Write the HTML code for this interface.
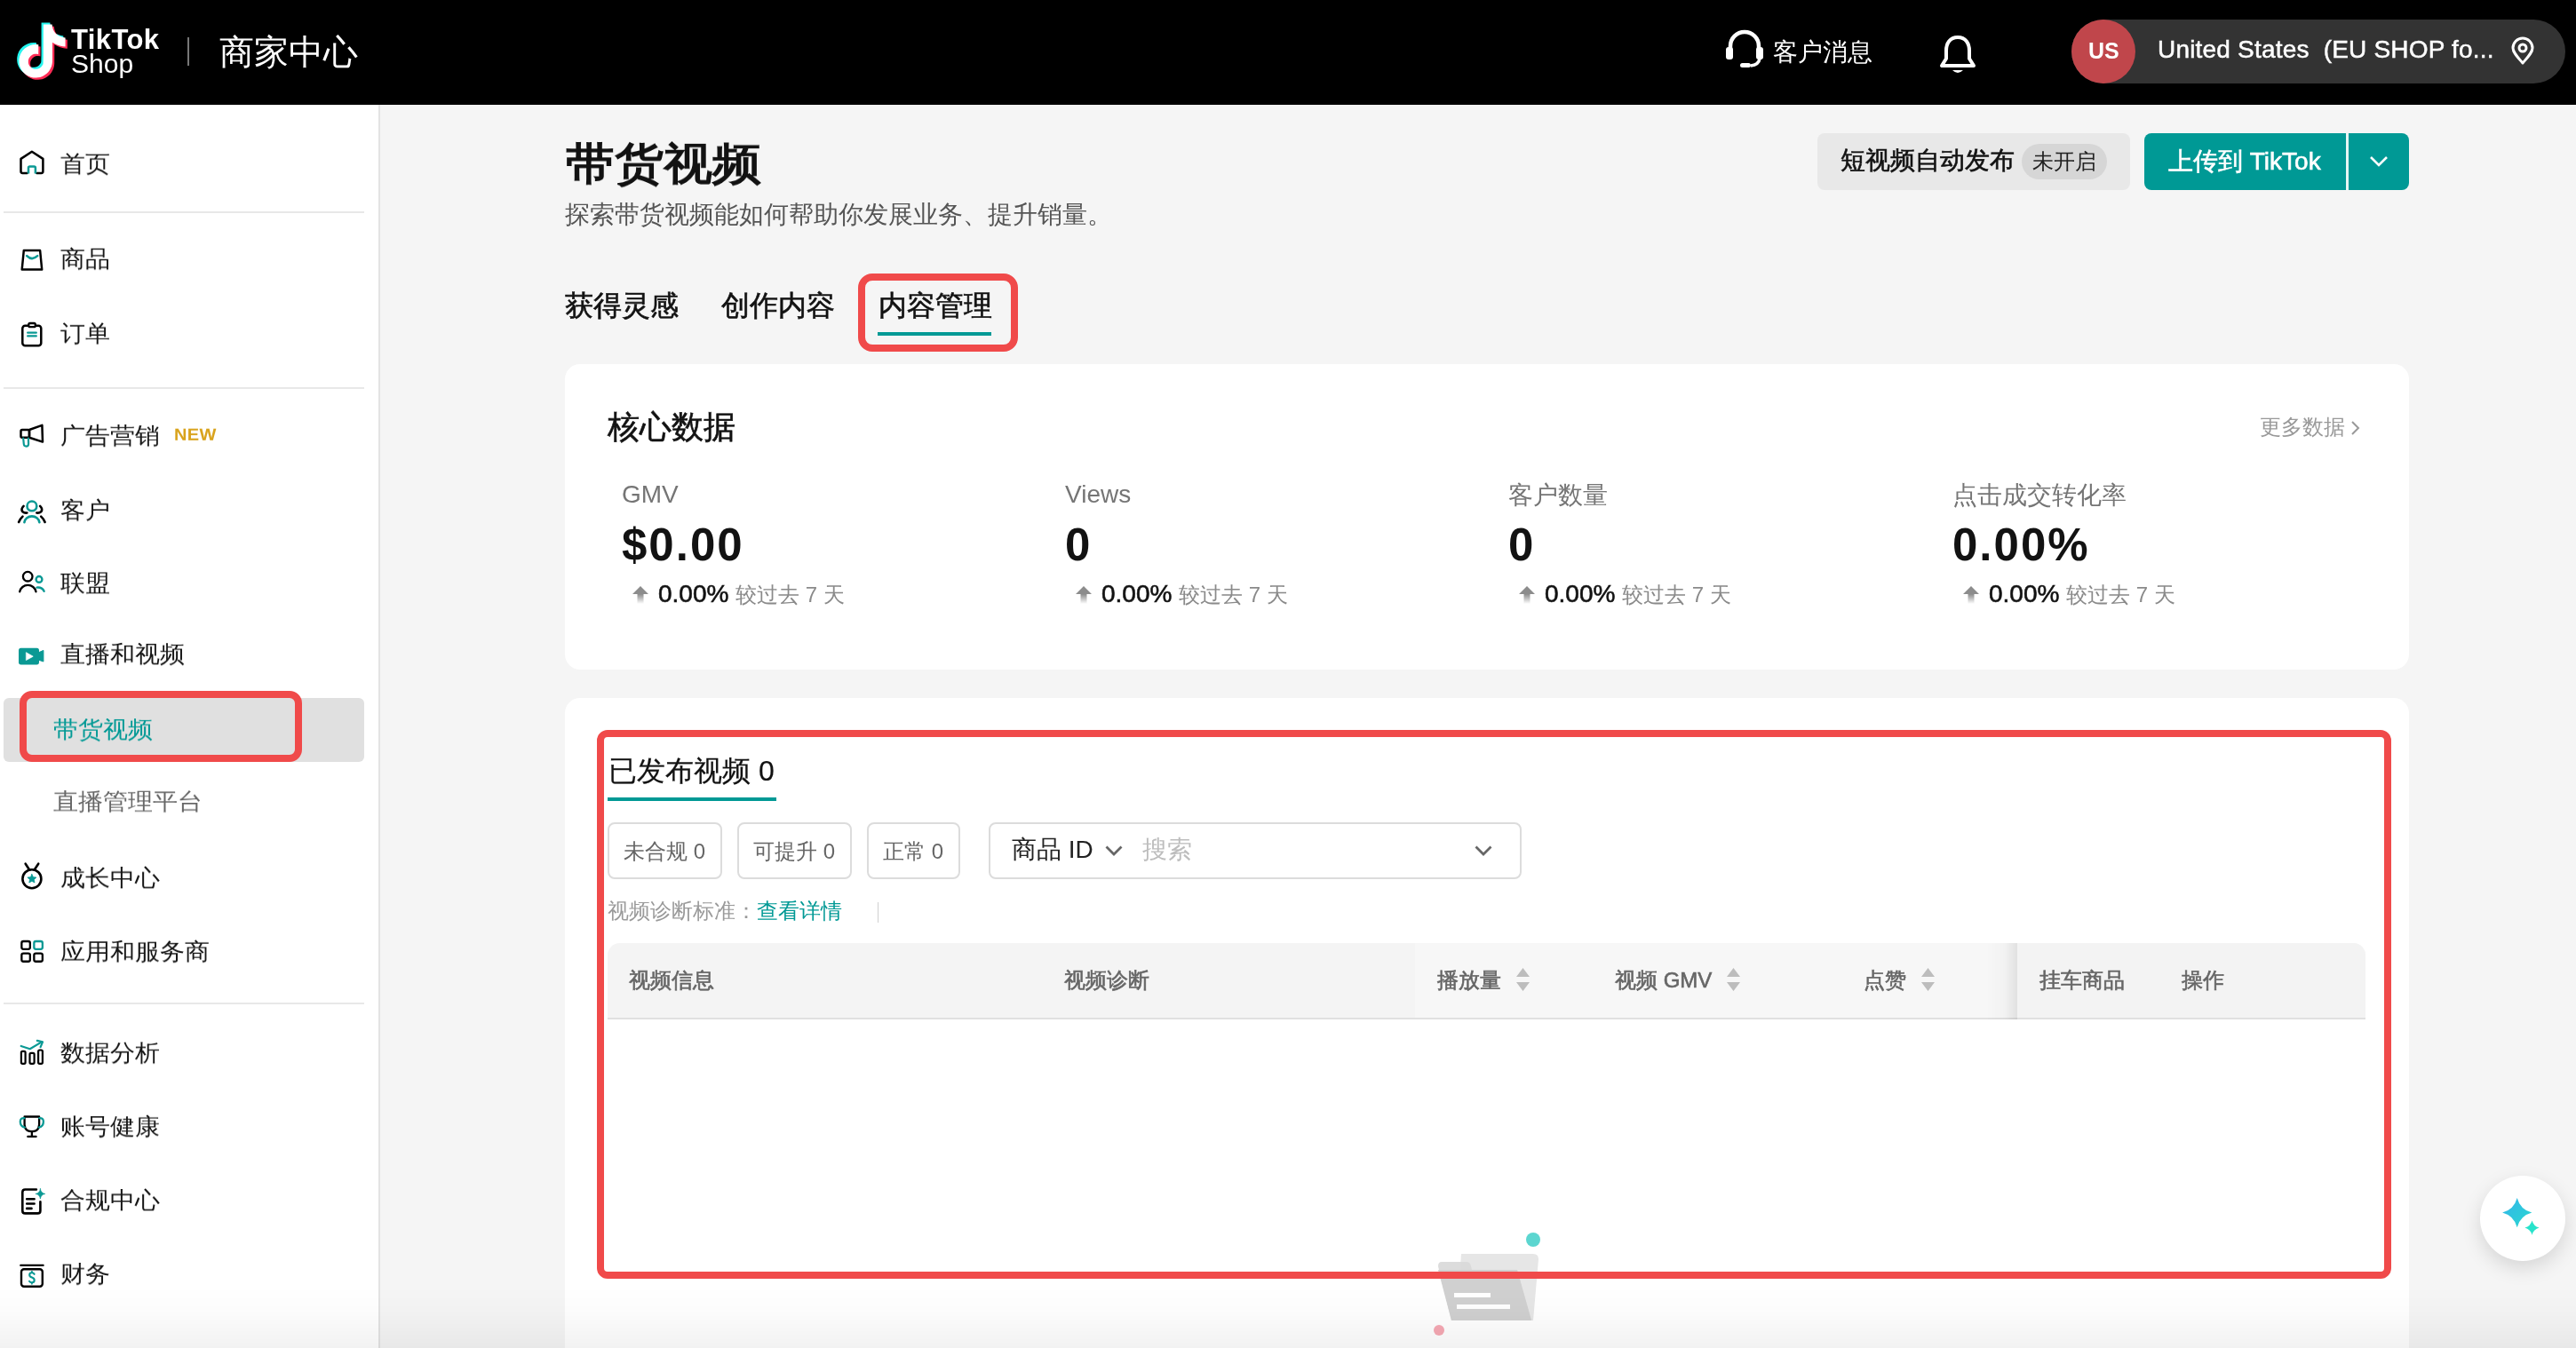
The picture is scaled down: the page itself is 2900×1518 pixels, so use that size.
<!DOCTYPE html>
<html><head><meta charset="utf-8">
<style>
*{box-sizing:border-box;margin:0;padding:0}
html,body{width:2900px;height:1518px;overflow:hidden;background:#f5f5f5;font-family:"Liberation Sans",sans-serif;color:#121212}
.a{position:absolute;white-space:nowrap;will-change:transform}
#hdr{position:absolute;left:0;top:0;width:2900px;height:118px;background:#000}
#side{position:absolute;left:0;top:118px;width:428px;height:1400px;background:#fff;border-right:2px solid #e3e3e3}
.si{position:absolute;will-change:transform;transform:scaleY(0.94);transform-origin:0 55%;left:68px;font-size:28px;line-height:28px;color:#161616;white-space:nowrap}
.ic{position:absolute;overflow:visible}
.dv{position:absolute;left:4px;width:406px;height:2px;background:#e8e8e8}
.card{position:absolute;left:636px;width:2076px;background:#fff;border-radius:17px}
.teal{color:#009995}
.red{position:absolute;z-index:5;border:8px solid #f04a4a;border-radius:14px}
</style></head><body>
<!-- HEADER -->
<div id="hdr">
  <svg class="ic" style="left:17px;top:24px" width="60" height="68" viewBox="0 0 24 27">
    <g transform="translate(0.2,1.3)">
    <path fill="#25F4EE" transform="translate(-0.9,-0.8)" d="M12.53.02c1.31-.02 2.61-.01 3.91-.02.08 1.53.63 3.09 1.75 4.17 1.12 1.11 2.7 1.62 4.24 1.79v4.03c-1.44-.05-2.89-.35-4.2-.97-.57-.26-1.1-.59-1.62-.93-.01 2.92.01 5.84-.02 8.75-.08 1.4-.54 2.79-1.35 3.94-1.31 1.92-3.58 3.17-5.91 3.21-1.43.08-2.86-.31-4.08-1.03-2.02-1.19-3.44-3.37-3.65-5.71-.02-.5-.03-1-.01-1.49.18-1.9 1.12-3.72 2.58-4.96 1.66-1.44 3.98-2.13 6.15-1.72.02 1.48-.04 2.96-.04 4.44-.99-.32-2.15-.23-3.02.37-.63.41-1.11 1.04-1.36 1.75-.21.51-.15 1.07-.14 1.61.24 1.64 1.82 3.02 3.5 2.87 1.12-.01 2.19-.66 2.77-1.61.19-.33.4-.67.41-1.06.1-1.79.06-3.57.07-5.36.01-4.03-.01-8.05.02-12.07z"/>
    <path fill="#FE2C55" transform="translate(0.9,0.9)" d="M12.53.02c1.31-.02 2.61-.01 3.91-.02.08 1.53.63 3.09 1.75 4.17 1.12 1.11 2.7 1.62 4.24 1.79v4.03c-1.44-.05-2.89-.35-4.2-.97-.57-.26-1.1-.59-1.62-.93-.01 2.920.01 5.84-.02 8.75-.08 1.4-.54 2.79-1.350 3.94-1.31 1.92-3.58 3.17-5.91 3.21-1.43.08-2.86-.31-4.08-1.03-2.02-1.19-3.44-3.37-3.65-5.710-.02-.5-.03-1-.01-1.49.18-1.9 1.12-3.72 2.58-4.96 1.66-1.44 3.98-2.13 6.15-1.72.02 1.48-.04 2.96-.04 4.44-.99-.32-2.15-.23-3.02.37-.63.41-1.11 1.04-1.36 1.75-.21.51-.15 1.07-.14 1.61.24 1.64 1.82 3.02 3.5 2.87 1.12-.01 2.19-.66 2.77-1.61.19-.33.4-.67.41-1.06.1-1.79.06-3.57.07-5.36.01-4.03-.01-8.05.02-12.07z"/>
    <path fill="#fff" d="M12.53.02c1.31-.02 2.61-.01 3.91-.02.08 1.53.63 3.09 1.75 4.17 1.12 1.11 2.7 1.62 4.24 1.79v4.03c-1.44-.05-2.89-.35-4.2-.97-.57-.26-1.1-.59-1.62-.93-.01 2.92.01 5.84-.02 8.75-.08 1.4-.54 2.79-1.35 3.94-1.31 1.920-3.58 3.17-5.91 3.21-1.43.08-2.86-.31-4.08-1.03-2.02-1.19-3.44-3.37-3.65-5.71-.02-.5-.03-1-.01-1.49.18-1.9 1.12-3.72 2.58-4.96 1.66-1.44 3.98-2.13 6.15-1.72.02 1.48-.04 2.96-.04 4.44-.99-.32-2.15-.23-3.02.37-.63.41-1.11 1.04-1.36 1.75-.21.51-.15 1.07-.14 1.61.24 1.64 1.82 3.02 3.5 2.87 1.12-.01 2.19-.66 2.77-1.61.19-.33.4-.67.41-1.06.1-1.79.06-3.57.07-5.36.01-4.03-.01-8.05.02-12.07z"/>
    </g>
  </svg>
  <div class="a" style="left:80px;top:29px;font-size:31px;line-height:31px;font-weight:bold;color:#fff;letter-spacing:0.4px">TikTok</div>
  <div class="a" style="left:80px;top:57px;font-size:30px;line-height:30px;color:#fff;letter-spacing:0px">Shop</div>
  <div class="a" style="left:211px;top:42px;width:2px;height:32px;background:#777"></div>
  <div class="a" style="left:247px;top:39px;font-size:39px;line-height:39px;color:#fff">商家中心</div>

  <svg class="ic" style="left:1940px;top:32px" width="48" height="46" viewBox="0 0 48 46">
    <path d="M8 26 V20 A16 16 0 0 1 40 20 V26" fill="none" stroke="#fff" stroke-width="4.5"/>
    <rect x="3" y="21" width="8" height="14" rx="3" fill="#fff"/>
    <rect x="37" y="21" width="8" height="14" rx="3" fill="#fff"/>
    <path d="M41 34 Q40 41 31 42" fill="none" stroke="#fff" stroke-width="3.5"/>
    <rect x="19" y="39" width="12" height="5" rx="2.5" fill="#fff"/>
  </svg>
  <div class="a" style="left:1996px;top:45px;font-size:28px;line-height:28px;color:#fff">客户消息</div>
  <svg class="ic" style="left:2180px;top:38px" width="48" height="48" viewBox="0 0 48 48">
    <path d="M24 4 C15 4 11 11 11 19 V28 L6 36 H42 L37 28 V19 C37 11 33 4 24 4 Z" fill="none" stroke="#fff" stroke-width="4" stroke-linejoin="round"/>
    <path d="M18 41 Q24 47 30 41 Z" fill="#fff"/>
  </svg>
  <div class="a" style="left:2332px;top:22px;width:556px;height:72px;border-radius:36px;background:#333"></div>
  <div class="a" style="left:2332px;top:22px;width:72px;height:72px;border-radius:36px;background:#c0464b"></div>
  <div class="a" style="left:2351px;top:45px;font-size:25px;line-height:25px;color:#fff;font-weight:bold">US</div>
  <div class="a" style="left:2429px;top:42px;font-size:28px;line-height:28px;color:#fff;letter-spacing:0.2px;-webkit-text-stroke-width:0.5px">United States&nbsp; (EU SHOP fo...</div>
  <svg class="ic" style="left:2824px;top:42px" width="32" height="32" viewBox="0 0 32 32">
    <path d="M16 29 C10 22 5 17 5 12 A11 11 0 0 1 27 12 C27 17 22 22 16 29 Z" fill="none" stroke="#fff" stroke-width="3" stroke-linejoin="round"/>
    <circle cx="16" cy="12" r="4" fill="none" stroke="#fff" stroke-width="3"/>
  </svg>
</div>
<!-- SIDEBAR -->
<div id="side"></div>
<div class="dv" style="top:238px"></div>
<div class="dv" style="top:436px"></div>
<div class="dv" style="top:1129px"></div>
<div class="a" style="left:4px;top:786px;width:406px;height:72px;background:#e0e0e0;border-radius:6px"></div>
<div class="red" style="left:22px;top:778px;width:318px;height:80px"></div>

<div class="si" style="top:171px">首页</div>
<div class="si" style="top:278px">商品</div>
<div class="si" style="top:362px">订单</div>
<div class="si" style="top:477px">广告营销<span style="font-size:20px;font-weight:bold;color:#d9a31c;margin-left:16px;vertical-align:2px;letter-spacing:0.3px;position:relative;top:-2px">NEW</span></div>
<div class="si" style="top:561px">客户</div>
<div class="si" style="top:643px">联盟</div>
<div class="si" style="top:723px">直播和视频</div>
<div class="si" style="top:808px;left:60px;color:#009995">带货视频</div>
<div class="si" style="top:889px;left:60px;color:#666">直播管理平台</div>
<div class="si" style="top:975px">成长中心</div>
<div class="si" style="top:1058px">应用和服务商</div>
<div class="si" style="top:1172px">数据分析</div>
<div class="si" style="top:1255px">账号健康</div>
<div class="si" style="top:1338px">合规中心</div>
<div class="si" style="top:1421px">财务</div>
<!--ICONS-->
<svg class="ic" style="left:15px;top:160px" width="45" height="45" viewBox="0 0 45 45" fill="none" stroke-linecap="round" stroke-linejoin="round"><path d="M15.5 34.9 H10.4 Q8.5 34.9 8.5 33 V18.9 L20.9 10.7 L33.4 18.9 V33 Q33.4 34.9 31.5 34.9 H26.4" stroke="#000" stroke-width="2.5"/><path d="M17 35.6 V29 Q17 27.4 18.6 27.4 H23.3 Q24.9 27.4 24.9 29 V35.6" stroke="#0a9994" stroke-width="2.5" stroke-linecap="butt"/></svg>
<svg class="ic" style="left:15px;top:260px" width="45" height="45" viewBox="0 0 45 45" fill="none" stroke-linecap="round" stroke-linejoin="round"><path d="M11.8 22 H30.1 L32.2 43.5 H9.7 Z" stroke="#000" stroke-width="2.5"/><path d="M15.2 28.2 Q21 34 27.2 28.2" stroke="#0a9994" stroke-width="2.5"/></svg>
<svg class="ic" style="left:15px;top:355px" width="45" height="45" viewBox="0 0 45 45" fill="none" stroke-linecap="round" stroke-linejoin="round"><rect x="10.3" y="11.7" width="21" height="22.6" rx="3" stroke="#000" stroke-width="2.5"/><rect x="17.3" y="9" width="7.5" height="4.2" rx="1.5" stroke="#000" stroke-width="2.3" fill="#fff"/><path d="M16.2 19.7 H25.8 M16.2 23.4 H25.8" stroke="#0a9994" stroke-width="2.3"/></svg>
<svg class="ic" style="left:15px;top:470px" width="45" height="45" viewBox="0 0 45 45" fill="none" stroke-linecap="round" stroke-linejoin="round"><path d="M18 14 L32.4 8.9 L33 27.6 L18 22.7 Z" stroke="#000" stroke-width="2.5"/><rect x="8.5" y="14" width="9.5" height="8.7" rx="1.5" stroke="#000" stroke-width="2.5"/><path d="M11.2 23.6 L11.8 30 Q12 32.6 14.5 32.6 Q17.1 32.6 17.1 30 L16.9 23.6" stroke="#0a9994" stroke-width="2.2"/></svg>
<svg class="ic" style="left:15px;top:555px" width="45" height="45" viewBox="0 0 45 45" fill="none" stroke-linecap="round" stroke-linejoin="round"><circle cx="20.9" cy="14.9" r="5.4" stroke="#0a9994" stroke-width="2.6"/><path d="M12.4 33.2 A8.6 8 0 0 1 29.4 33.2" stroke="#0a9994" stroke-width="2.6"/><path d="M11.6 14.9 Q8 18.5 10.5 21.3 Q12.5 23 15.4 22.5 M30.1 14.9 Q33.7 18.5 31.2 21.3 Q29.2 23 26.3 22.5" stroke="#000" stroke-width="2.6"/><path d="M10.5 26.6 Q7.3 29.5 6.1 33 M31.2 26.6 Q34.4 29.5 35.6 33" stroke="#000" stroke-width="2.6"/></svg>
<svg class="ic" style="left:15px;top:635px" width="45" height="45" viewBox="0 0 45 45" fill="none" stroke-linecap="round" stroke-linejoin="round"><circle cx="16.2" cy="14.2" r="5.3" stroke="#000" stroke-width="2.3"/><path d="M7.2 31.3 A9.3 9 0 0 1 25.5 31.3" stroke="#000" stroke-width="2.3"/><circle cx="29" cy="17.4" r="3.4" stroke="#0a9994" stroke-width="2.4"/><path d="M26.4 26.6 Q32.5 26 34.6 30.8" stroke="#0a9994" stroke-width="2.4"/></svg>
<svg class="ic" style="left:15px;top:715px" width="45" height="45" viewBox="0 0 45 45" fill="none" stroke-linecap="round" stroke-linejoin="round"><rect x="6" y="14.7" width="23" height="18.7" rx="2.6" fill="#0a9994"/><path d="M28.5 19.8 L33.9 17.4 V30 L28.5 28.2 Z" fill="#0a9994" stroke="#0a9994" stroke-width="1"/><path d="M14.7 19.9 L22.2 24.2 L14.7 28.3 Z" fill="#fff" stroke="#fff" stroke-width="0.8"/></svg>
<svg class="ic" style="left:15px;top:963px" width="45" height="45" viewBox="0 0 45 45" fill="none" stroke-linecap="round" stroke-linejoin="round"><circle cx="20.9" cy="26.7" r="10.5" stroke="#000" stroke-width="2.6"/><path d="M13.7 9.7 L17.6 15.8 M28.2 9.7 L24.2 15.8" stroke="#000" stroke-width="2.6"/><path d="M20.9 21.5 L22.4 24.7 L25.9 25.1 L23.3 27.5 L24 31 L20.9 29.3 L17.8 31 L18.5 27.5 L15.9 25.1 L19.4 24.7 Z" fill="#0a9994" stroke="#0a9994" stroke-width="0.8"/></svg>
<svg class="ic" style="left:15px;top:1048px" width="45" height="45" viewBox="0 0 45 45" fill="none" stroke-linecap="round" stroke-linejoin="round"><rect x="9.35" y="12" width="9.5" height="8.85" rx="2" stroke="#000" stroke-width="2.3"/><rect x="23.35" y="12" width="9.5" height="8.85" rx="2" stroke="#0a9994" stroke-width="2.3"/><rect x="9.35" y="25.55" width="9.5" height="9.2" rx="2" stroke="#000" stroke-width="2.3"/><rect x="23.35" y="25.55" width="9.5" height="9.2" rx="2" stroke="#000" stroke-width="2.3"/></svg>
<svg class="ic" style="left:15px;top:1163px" width="45" height="45" viewBox="0 0 45 45" fill="none" stroke-linecap="round" stroke-linejoin="round"><rect x="8.9" y="20.8" width="4.7" height="14" rx="1.5" stroke="#000" stroke-width="2.2"/><rect x="18.5" y="22.8" width="5.1" height="12" rx="1.5" stroke="#000" stroke-width="2.2"/><rect x="28.1" y="19.5" width="4.8" height="15.3" rx="1.5" stroke="#000" stroke-width="2.2"/><path d="M8.7 15 L18.7 18.2 L31.5 10.6" stroke="#0a9994" stroke-width="2.2"/><path d="M26.8 8.9 L33 10.3 L30.6 16.2" stroke="#0a9994" stroke-width="2.2"/></svg>
<svg class="ic" style="left:15px;top:1245px" width="45" height="45" viewBox="0 0 45 45" fill="none" stroke-linecap="round" stroke-linejoin="round"><path d="M12.6 12.5 H29.1 V21.6 Q29 29 20.9 29.2 Q12.8 29 12.6 21.6 Z" stroke="#000" stroke-width="2.3"/><path d="M20.9 29.2 V34.8 M16.3 34.9 H25.6" stroke="#000" stroke-width="2.3"/><path d="M12.4 14.2 Q7.8 13.8 7.8 18 Q7.8 23.5 12.8 24.6 M29.3 14.2 Q33.9 13.8 33.9 18 Q33.9 23.5 28.9 24.6" stroke="#0a9994" stroke-width="2.3"/></svg>
<svg class="ic" style="left:15px;top:1328px" width="45" height="45" viewBox="0 0 45 45" fill="none" stroke-linecap="round" stroke-linejoin="round"><path d="M25.9 11.5 H13.3 Q10.3 11.5 10.3 14.5 V35.4 Q10.3 38.4 13.3 38.4 H27.4 Q30.4 38.4 30.4 35.4 V25.2" stroke="#000" stroke-width="2.6"/><path d="M15.2 22.2 H23.6 M15.2 27.5 H23.6 M15.2 32.9 H20.5" stroke="#000" stroke-width="2.6"/><path d="M30.4 10.6 Q31 15.8 35.9 16.4 Q31 17 30.4 22.2 Q29.8 17 24.9 16.4 Q29.8 15.8 30.4 10.6 Z" fill="#0a9994" stroke="#0a9994" stroke-width="0.6"/></svg>
<svg class="ic" style="left:15px;top:1413px" width="45" height="45" viewBox="0 0 45 45" fill="none" stroke-linecap="round" stroke-linejoin="round"><path d="M8.3 11.9 H33.6" stroke="#000" stroke-width="2.3"/><rect x="9" y="16.2" width="23.8" height="19.6" rx="3" stroke="#000" stroke-width="2.4"/><path d="M23.6 21.8 Q22.8 20.3 20.9 20.3 Q18.2 20.3 18.2 22.7 Q18.2 24.6 20.9 25.5 Q23.7 26.4 23.7 28.7 Q23.7 31.2 20.9 31.2 Q18.8 31.2 18 29.8 M20.9 19 V20.3 M20.9 31.2 V32.6" stroke="#0a9994" stroke-width="2.1"/></svg>


<!-- MAIN -->
<div class="a" style="left:637px;top:160px;font-size:55px;line-height:55px;font-weight:bold;color:#121212;transform:scaleY(0.9);transform-origin:0 0">带货视频</div>
<div class="a" style="left:636px;top:228px;font-size:28px;line-height:28px;color:#555">探索带货视频能如何帮助你发展业务、提升销量。</div>
<div class="a" style="left:636px;top:328px;font-size:32px;line-height:32px;-webkit-text-stroke-width:0.6px;color:#121212">获得灵感</div>
<div class="a" style="left:812px;top:328px;font-size:32px;line-height:32px;-webkit-text-stroke-width:0.6px;color:#121212">创作内容</div>
<div class="a" style="left:989px;top:328px;font-size:32px;line-height:32px;-webkit-text-stroke-width:0.6px;color:#121212">内容管理</div>
<div class="a" style="left:988px;top:374px;width:128px;height:4px;background:#009995"></div>
<div class="red" style="left:966px;top:308px;width:180px;height:88px;border-radius:16px"></div>

<div class="a" style="left:2046px;top:150px;width:352px;height:64px;background:#e8e8e8;border-radius:8px"></div>
<div class="a" style="left:2072px;top:167px;font-size:28px;line-height:28px;-webkit-text-stroke-width:0.6px;color:#121212">短视频自动发布</div>
<div class="a" style="left:2276px;top:162px;width:96px;height:40px;background:#d6d6d6;border-radius:20px"></div>
<div class="a" style="left:2288px;top:170px;font-size:24px;line-height:24px;color:#222">未开启</div>
<div class="a" style="left:2414px;top:150px;width:298px;height:64px;background:#009995;border-radius:8px"></div>
<div class="a" style="left:2641px;top:150px;width:3px;height:64px;background:#e6f5f4"></div>
<div class="a" style="left:2441px;top:168px;font-size:28px;line-height:28px;-webkit-text-stroke-width:0.6px;color:#fff">上传到 TikTok</div>
<svg class="ic" style="left:2664px;top:170px" width="28" height="24" viewBox="0 0 28 24"><polyline points="5,7 14,16 23,7" fill="none" stroke="#fff" stroke-width="2.6"/></svg>

<!-- card 1 -->
<div class="card" style="top:410px;height:344px"></div>
<div class="a" style="left:684px;top:463px;font-size:36px;line-height:36px;-webkit-text-stroke-width:0.6px">核心数据</div>
<div class="a" style="left:2544px;top:469px;font-size:24px;line-height:24px;color:#999">更多数据</div>
<svg class="ic" style="left:2644px;top:472px" width="16" height="20" viewBox="0 0 16 20"><polyline points="4,3 11,10 4,17" fill="none" stroke="#999" stroke-width="2"/></svg>
<div class="a" style="left:700px;top:543px;font-size:28px;line-height:28px;color:#757575">GMV</div>
<div class="a" style="left:700px;top:588px;font-size:51px;line-height:51px;font-weight:bold;color:#121212;letter-spacing:2px">$0.00</div>
<svg class="ic" style="left:711px;top:659px" width="20" height="22" viewBox="0 0 20 22"><defs><linearGradient id="g701" x1="0" y1="0" x2="0" y2="1"><stop offset="0.45" stop-color="#8c8c8c"/><stop offset="1" stop-color="#fff"/></linearGradient></defs><path d="M10 1 L19 10 H13.5 V21 H6.5 V10 H1 Z" fill="url(#g701)"/></svg>
<div class="a" style="left:741px;top:655px;font-size:28px;line-height:28px;color:#121212"><span style="-webkit-text-stroke-width:0.6px">0.00%</span> <span style="font-size:24px;color:#8a8a8a">较过去 7 天</span></div>
<div class="a" style="left:1198.5px;top:543px;font-size:28px;line-height:28px;color:#757575">Views</div>
<div class="a" style="left:1198.5px;top:588px;font-size:51px;line-height:51px;font-weight:bold;color:#121212;letter-spacing:2px">0</div>
<svg class="ic" style="left:1209.5px;top:659px" width="20" height="22" viewBox="0 0 20 22"><defs><linearGradient id="g1199" x1="0" y1="0" x2="0" y2="1"><stop offset="0.45" stop-color="#8c8c8c"/><stop offset="1" stop-color="#fff"/></linearGradient></defs><path d="M10 1 L19 10 H13.5 V21 H6.5 V10 H1 Z" fill="url(#g1199)"/></svg>
<div class="a" style="left:1239.5px;top:655px;font-size:28px;line-height:28px;color:#121212"><span style="-webkit-text-stroke-width:0.6px">0.00%</span> <span style="font-size:24px;color:#8a8a8a">较过去 7 天</span></div>
<div class="a" style="left:1698px;top:544px;font-size:28px;line-height:28px;color:#757575">客户数量</div>
<div class="a" style="left:1698px;top:588px;font-size:51px;line-height:51px;font-weight:bold;color:#121212;letter-spacing:2px">0</div>
<svg class="ic" style="left:1709px;top:659px" width="20" height="22" viewBox="0 0 20 22"><defs><linearGradient id="g1699" x1="0" y1="0" x2="0" y2="1"><stop offset="0.45" stop-color="#8c8c8c"/><stop offset="1" stop-color="#fff"/></linearGradient></defs><path d="M10 1 L19 10 H13.5 V21 H6.5 V10 H1 Z" fill="url(#g1699)"/></svg>
<div class="a" style="left:1739px;top:655px;font-size:28px;line-height:28px;color:#121212"><span style="-webkit-text-stroke-width:0.6px">0.00%</span> <span style="font-size:24px;color:#8a8a8a">较过去 7 天</span></div>
<div class="a" style="left:2197.7px;top:544px;font-size:28px;line-height:28px;color:#757575">点击成交转化率</div>
<div class="a" style="left:2197.7px;top:588px;font-size:51px;line-height:51px;font-weight:bold;color:#121212;letter-spacing:2px">0.00%</div>
<svg class="ic" style="left:2208.7px;top:659px" width="20" height="22" viewBox="0 0 20 22"><defs><linearGradient id="g2198" x1="0" y1="0" x2="0" y2="1"><stop offset="0.45" stop-color="#8c8c8c"/><stop offset="1" stop-color="#fff"/></linearGradient></defs><path d="M10 1 L19 10 H13.5 V21 H6.5 V10 H1 Z" fill="url(#g2198)"/></svg>
<div class="a" style="left:2238.7px;top:655px;font-size:28px;line-height:28px;color:#121212"><span style="-webkit-text-stroke-width:0.6px">0.00%</span> <span style="font-size:24px;color:#8a8a8a">较过去 7 天</span></div>

<!-- card 2 -->
<div class="card" style="top:786px;height:800px"></div>
<div class="a" style="left:685px;top:852px;font-size:32px;line-height:32px;-webkit-text-stroke-width:0.2px;color:#121212">已发布视频 0</div>
<div class="a" style="left:684px;top:898px;width:190px;height:4px;background:#009995"></div>
<div class="a" style="left:684px;top:926px;width:129px;height:64px;border:2px solid #dcdcdc;border-radius:8px"></div>
<div class="a" style="left:830px;top:926px;width:129px;height:64px;border:2px solid #dcdcdc;border-radius:8px"></div>
<div class="a" style="left:976px;top:926px;width:105px;height:64px;border:2px solid #dcdcdc;border-radius:8px"></div>
<div class="a" style="left:702px;top:947px;font-size:24px;line-height:24px;color:#666">未合规 0</div>
<div class="a" style="left:848px;top:947px;font-size:24px;line-height:24px;color:#666">可提升 0</div>
<div class="a" style="left:994px;top:947px;font-size:24px;line-height:24px;color:#666">正常 0</div>
<div class="a" style="left:1113px;top:926px;width:600px;height:64px;border:2px solid #dcdcdc;border-radius:8px"></div>
<div class="a" style="left:1139px;top:943px;font-size:28px;line-height:28px;color:#222">商品 ID</div>
<svg class="ic" style="left:1242px;top:948px" width="24" height="20" viewBox="0 0 24 20"><polyline points="3.5,5.5 12,14 20.5,5.5" fill="none" stroke="#666" stroke-width="2.8"/></svg>
<div class="a" style="left:1286px;top:943px;font-size:28px;line-height:28px;color:#bdbdbd">搜索</div>
<svg class="ic" style="left:1658px;top:948px" width="24" height="20" viewBox="0 0 24 20"><polyline points="3.5,5.5 12,14 20.5,5.5" fill="none" stroke="#666" stroke-width="2.8"/></svg>
<div class="a" style="left:684px;top:1014px;font-size:24px;line-height:24px;color:#9a9a9a">视频诊断标准：</div>
<div class="a" style="left:852px;top:1014px;font-size:24px;line-height:24px;color:#009995">查看详情</div>
<div class="a" style="left:988px;top:1016px;width:1px;height:23px;background:#d0d0d0"></div>

<div class="a" style="left:684px;top:1062px;width:1979px;height:86px;background:#f4f4f4;border-radius:14px 14px 0 0;border-bottom:2px solid #e0e0e0"></div>
<div class="a" style="left:1593px;top:1062px;width:678px;height:84px;background:#f7f7f7"></div>
<div class="a" style="left:2236px;top:1062px;width:35px;height:86px;background:linear-gradient(to right,rgba(0,0,0,0) 0%,rgba(0,0,0,0.02) 60%,rgba(0,0,0,0.085) 100%)"></div>
<div class="a" style="left:2271px;top:1062px;width:392px;height:84px;background:#f3f3f3;border-radius:0 14px 0 0"></div>
<div class="a" style="left:707.5px;top:1092px;font-size:24px;line-height:24px;-webkit-text-stroke-width:0.6px;color:#666">视频信息</div>
<div class="a" style="left:1197.8px;top:1092px;font-size:24px;line-height:24px;-webkit-text-stroke-width:0.6px;color:#666">视频诊断</div>
<div class="a" style="left:1617.8px;top:1092px;font-size:24px;line-height:24px;-webkit-text-stroke-width:0.6px;color:#666">播放量</div>
<div class="a" style="left:1817.8px;top:1092px;font-size:24px;line-height:24px;-webkit-text-stroke-width:0.6px;color:#666">视频 GMV</div>
<div class="a" style="left:2098px;top:1092px;font-size:24px;line-height:24px;-webkit-text-stroke-width:0.6px;color:#666">点赞</div>
<div class="a" style="left:2295.7px;top:1092px;font-size:24px;line-height:24px;-webkit-text-stroke-width:0.6px;color:#666">挂车商品</div>
<div class="a" style="left:2456px;top:1092px;font-size:24px;line-height:24px;-webkit-text-stroke-width:0.6px;color:#666">操作</div>
<svg class="ic" style="left:1706px;top:1089px" width="17" height="28" viewBox="0 0 17 28"><path d="M8.5 1 L16 11 H1 Z M8.5 27 L16 17 H1 Z" fill="#bdbdbd"/></svg>
<svg class="ic" style="left:1943px;top:1089px" width="17" height="28" viewBox="0 0 17 28"><path d="M8.5 1 L16 11 H1 Z M8.5 27 L16 17 H1 Z" fill="#bdbdbd"/></svg>
<svg class="ic" style="left:2162px;top:1089px" width="17" height="28" viewBox="0 0 17 28"><path d="M8.5 1 L16 11 H1 Z M8.5 27 L16 17 H1 Z" fill="#bdbdbd"/></svg>

<div class="red" style="left:672px;top:822px;width:2020px;height:618px;border-radius:12px"></div>

<!-- empty illustration -->
<svg class="ic" style="left:1600px;top:1380px" width="150" height="130" viewBox="1600 1380 150 130">
  <circle cx="1726" cy="1396" r="8" fill="#5cd6d0"/>
  <circle cx="1620" cy="1498" r="6" fill="#f6a9b4"/>
  <path d="M1645 1412 H1726 Q1732 1412 1732 1418 L1726 1487 H1640 Z" fill="#e6e6e6"/>
  <path d="M1623 1421 H1651 Q1655 1421 1656 1426 L1657 1430 H1708 L1724 1487 H1634 L1619 1426 Q1619 1421 1623 1421 Z" fill="#d8d8d8" fill-opacity="0.9"/>
  <path d="M1619 1430 H1708 L1724 1487 H1634 Z" fill="#d0d0d0"/>
  <rect x="1637" y="1456" width="41" height="5" fill="#fff"/>
  <rect x="1640" y="1469" width="60" height="5" fill="#fff"/>
</svg>

<!-- AI button -->
<div class="a" style="left:2792px;top:1324px;width:96px;height:96px;border-radius:48px;background:#fff;box-shadow:0 8px 22px rgba(0,0,0,0.13)"></div>
<svg class="ic" style="left:2810px;top:1340px" width="60" height="60" viewBox="0 0 60 60">
  <defs><linearGradient id="ai" x1="0" y1="0" x2="1" y2="1"><stop offset="0" stop-color="#33b5ea"/><stop offset="1" stop-color="#2ad8d0"/></linearGradient></defs>
  <path d="M23.7 9.0 Q27.19 22.11 40.3 25.6 Q27.19 29.09 23.7 42.2 Q20.21 29.09 7.099999999999998 25.6 Q20.21 22.11 23.7 9.0 Z" fill="url(#ai)"/>
  <path d="M40.5 34.5 Q42.2 40.9 48.6 42.6 Q42.2 44.3 40.5 50.7 Q38.8 44.3 32.4 42.6 Q38.8 40.9 40.5 34.5 Z" fill="#27e3cb"/>
</svg>

<!-- bottom fade -->
<div class="a" style="left:0;top:1448px;width:2900px;height:70px;background:linear-gradient(to bottom,rgba(0,0,0,0) 0%,rgba(0,0,0,0.012) 40%,rgba(0,0,0,0.05) 100%)"></div>

</body></html>
